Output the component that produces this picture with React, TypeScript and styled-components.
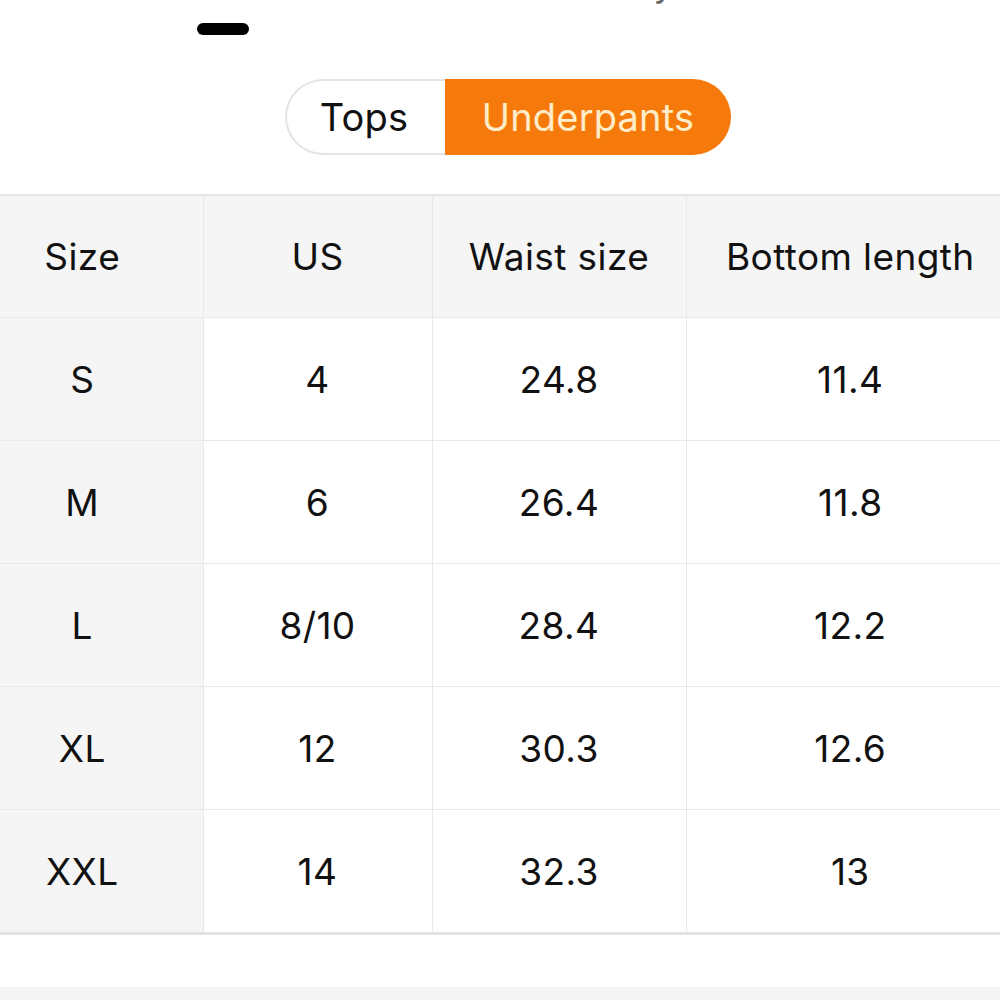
import React, {useState} from 'react';
import styled, {createGlobalStyle} from "styled-components";

const GlobalStyle = createGlobalStyle`
  html, body {
    margin: 0;
    padding: 0;
    background: #fff;
    font-family: Inter, "Noto Sans", "Liberation Sans", sans-serif;
    color: #111;
  }
`

const Page = styled.div`
  width: 1000px;
  height: 1000px;
  overflow: hidden;
  display: flex;
  flex-direction: column;
  background: #fff;
`

const TabRow = styled.div`
  display: grid;
  grid-template-columns: 446px 368px;
`

const Tab = styled.div`
  display: flex;
  flex-direction: column;
  align-items: center;
`

const TabLabel = styled.div<{ $active?: boolean }>`
  margin-top: -37px;
  font-size: 36px;
  line-height: 40px;
  color: ${props => props.$active ? "#111" : "#666"};
`

const Indicator = styled.div<{ $show?: boolean }>`
  margin-top: 20px;
  width: 52px;
  height: 12px;
  border-radius: 6px;
  background: ${props => props.$show ? "#000" : "transparent"};
`

const SwitchWrap = styled.div`
  display: flex;
  justify-content: center;
  padding-left: 16px;
  margin-top: 44px;
`

const Segment = styled.button<{ $active?: boolean; $side: "left" | "right" }>`
  height: 76px;
  width: ${props => props.$side === "left" ? "160px" : "286px"};
  box-sizing: border-box;
  border: 2px solid ${props => props.$active ? "#f67a0b" : "#e4e4e4"};
  border-right: ${props => props.$side === "left" ? "none" : undefined};
  border-left: ${props => props.$side === "right" ? "none" : undefined};
  border-radius: ${props => props.$side === "left" ? "38px 0 0 38px" : "0 38px 38px 0"};
  background: ${props => props.$active ? "#f67a0b" : "#fff"};
  color: ${props => props.$active ? "#ffedc9" : "#111"};
  font-family: inherit;
  font-size: 38px;
  letter-spacing: 0.2px;
  padding: 0;
  padding-left: ${props => props.$side === "right" ? "2px" : "0"};
  padding-right: ${props => props.$side === "left" ? "4px" : "0"};
  cursor: pointer;
`

const TableWrap = styled.div`
  margin-top: 39px;
  margin-left: -38px;
  width: 1052px;
  border-top: 2px solid #e6e6e6;
  border-bottom: 3px solid #e3e3e3;
`

const Table = styled.table`
  width: 100%;
  border-collapse: collapse;
  table-layout: fixed;
`

const Cell = styled.td<{ $shade?: boolean; $head?: boolean }>`
  height: ${props => props.$head ? "121px" : "122px"};
  padding: 0;
  text-align: center;
  vertical-align: middle;
  font-size: 37px;
  font-weight: 400;
  letter-spacing: 0.4px;
  color: #111;
  background: ${props => props.$shade ? "#f5f5f5" : "#fff"};
  border-left: 1px solid #e9e9e9;
  border-top: ${props => props.$head ? "none" : "1px solid #e9e9e9"};

  &:first-child {
    border-left: none;
  }
`

const Footer = styled.div`
  margin-top: 52px;
  flex: 1;
  background: #f5f5f5;
`

const columns = ["Size", "US", "Waist size", "Bottom length"];

const rows = [
    ["S", "4", "24.8", "11.4"],
    ["M", "6", "26.4", "11.8"],
    ["L", "8/10", "28.4", "12.2"],
    ["XL", "12", "30.3", "12.6"],
    ["XXL", "14", "32.3", "13"],
];

const App = () => {
    const [kind, setKind] = useState<string>("Underpants");

    return (
        <Page>
            <GlobalStyle/>
            <TabRow>
                <Tab>
                    <TabLabel $active>Size</TabLabel>
                    <Indicator $show/>
                </Tab>
                <Tab>
                    <TabLabel>Body</TabLabel>
                    <Indicator/>
                </Tab>
            </TabRow>
            <SwitchWrap>
                <Segment $side="left" $active={kind === "Tops"} onClick={() => setKind("Tops")}>Tops</Segment>
                <Segment $side="right" $active={kind === "Underpants"}
                         onClick={() => setKind("Underpants")}>Underpants</Segment>
            </SwitchWrap>
            <TableWrap>
                <Table>
                    <colgroup>
                        <col style={{width: 241}}/>
                        <col style={{width: 229}}/>
                        <col style={{width: 254}}/>
                        <col style={{width: 328}}/>
                    </colgroup>
                    <thead>
                    <tr>
                        {columns.map(c => <Cell as="th" key={c} $shade $head>{c}</Cell>)}
                    </tr>
                    </thead>
                    <tbody>
                    {rows.map(r => (
                        <tr key={r[0]}>
                            {r.map((v, i) => <Cell key={i} $shade={i === 0}>{v}</Cell>)}
                        </tr>
                    ))}
                    </tbody>
                </Table>
            </TableWrap>
            <Footer/>
        </Page>
    );
};

export default App;
